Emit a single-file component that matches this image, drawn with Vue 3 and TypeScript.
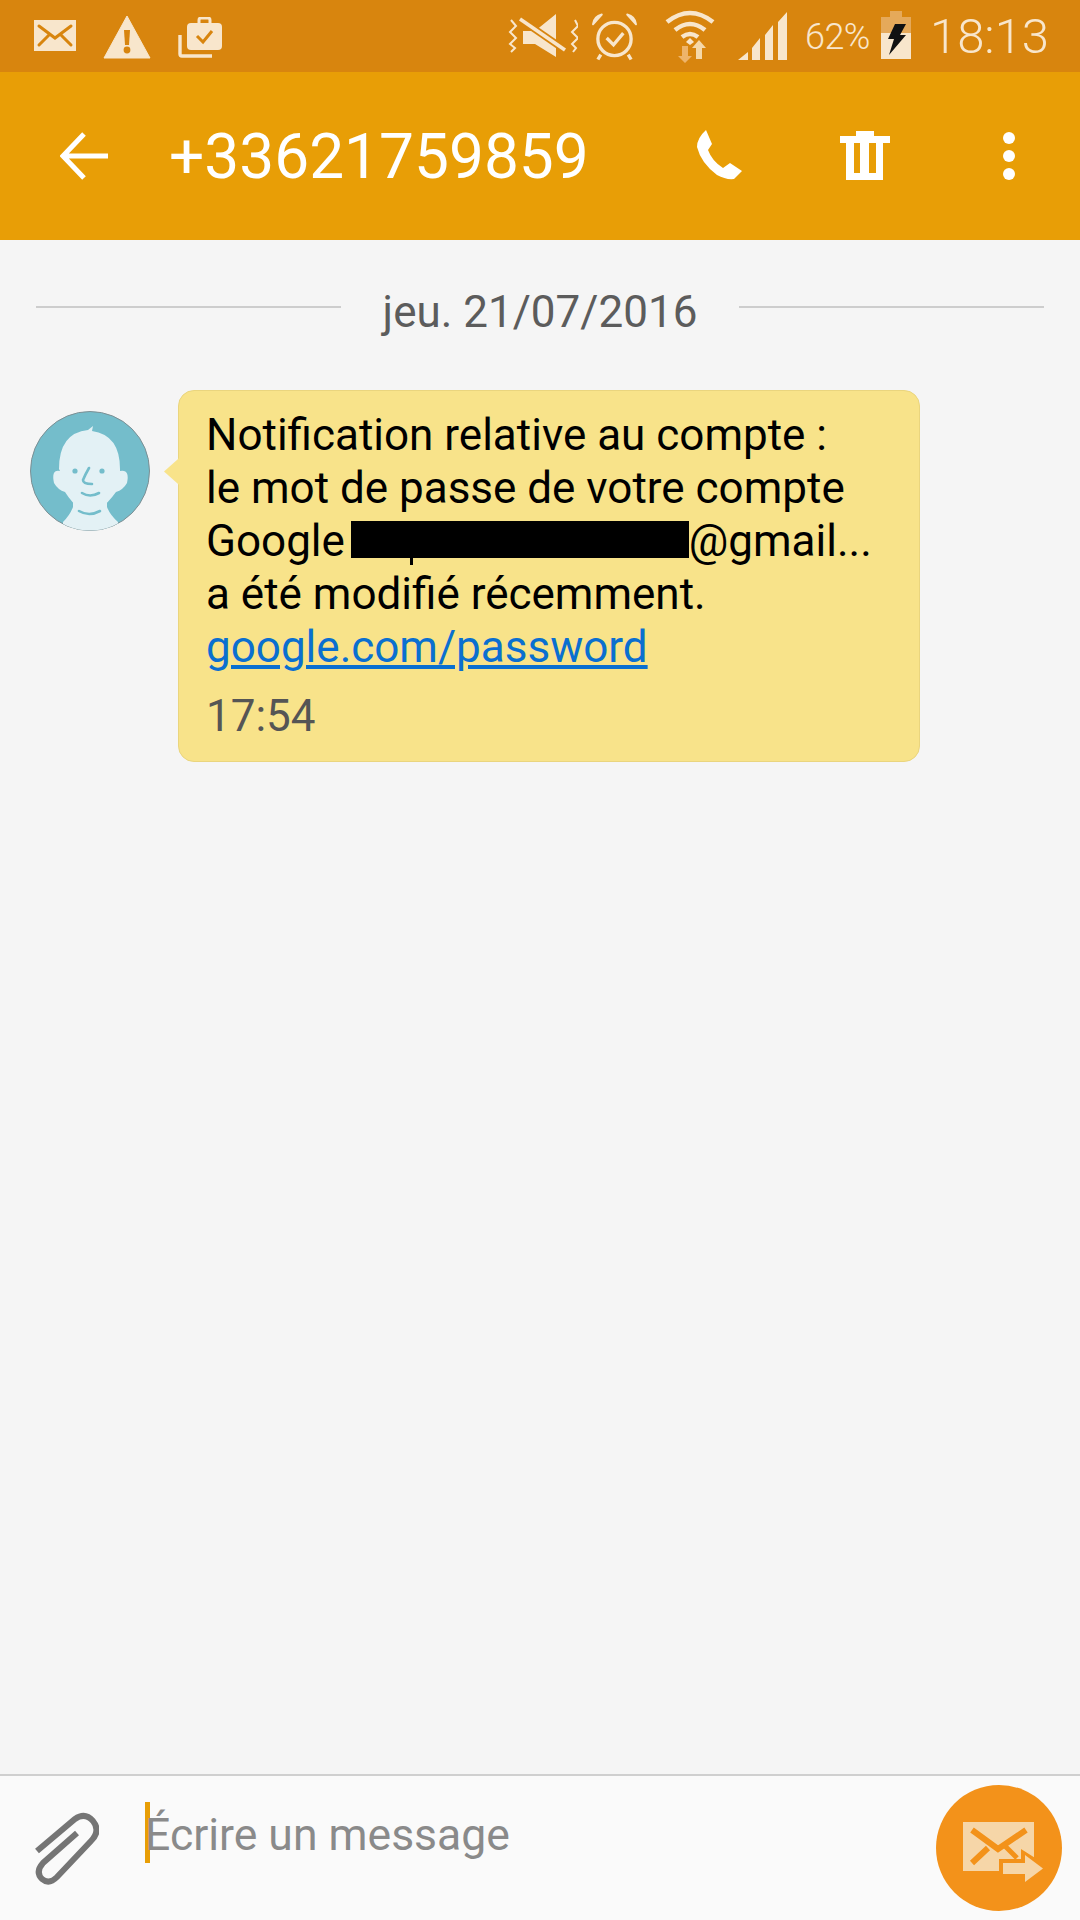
<script setup lang="ts">
const lines: string[] = ['Notification relative au compte :', 'le mot de passe de votre compte']
</script>

<template>
  <div class="screen">
    <header class="status">
      <div class="status-left">
        <svg class="i-mail" width="42" height="31" viewBox="0 0 42 31"><rect width="42" height="31" fill="#f8e6cc"/><path d="M5 6 L21 18 L37 6 M5 25 L15 15 M37 25 L27 15" fill="none" stroke="#d8850e" stroke-width="3" stroke-linecap="round"/></svg>
        <svg class="i-warn" width="48" height="44" viewBox="0 0 48 44"><path d="M24 1 L47 43 H1 Z" fill="#f8e6cc" stroke="#f8e6cc" stroke-linejoin="round"/><path d="M21 15 H27 L26 30 H22 Z" fill="#d8850e"/><circle cx="24" cy="35" r="3.4" fill="#d8850e"/></svg>
        <svg class="i-case" width="44" height="41" viewBox="0 0 44 41"><path d="M2 18 V37 Q2 39 4 39 H34" fill="none" stroke="#f8e6cc" stroke-width="3.4"/><rect x="9" y="6" width="35" height="27" rx="4" fill="#f8e6cc"/><path d="M21 6 V3 Q21 1 23 1 H30 Q32 1 32 3 V6" fill="none" stroke="#f8e6cc" stroke-width="3"/><path d="M19 19 L25 25 L34 14" fill="none" stroke="#d8850e" stroke-width="3"/></svg>
      </div>
      <div class="status-right">
        <svg class="i-vib" width="70" height="46" viewBox="0 0 70 46"><path d="M15 18 H27 L48 1 V44 L27 31 H15 Z" fill="#f8e6cc"/><path d="M12 6 L57 37" stroke="#d8850e" stroke-width="7"/><path d="M12 6 L57 37" stroke="#f8e6cc" stroke-width="3.6"/><path d="M3 7 L8 13 L2 19 L8 25 L2 31 L7 35 L3 39 M67 7 L70 13 L64 19 L70 25 L64 31 L68 35 L65 39" fill="none" stroke="#f8e6cc" stroke-width="2"/></svg>
        <svg class="i-alarm" width="45" height="48" viewBox="0 0 46 48"><circle cx="23" cy="26" r="17" fill="none" stroke="#f8e6cc" stroke-width="3.4"/><path d="M1 11 Q2 3 10 1 Z M45 11 Q44 3 36 1 Z" fill="#f8e6cc" stroke="#f8e6cc" stroke-width="2" stroke-linejoin="round"/><path d="M9 42 L6 47 M37 42 L40 47" stroke="#f8e6cc" stroke-width="3.4"/><path d="M15 25 L22 32 L32 20" fill="none" stroke="#f8e6cc" stroke-width="3.4"/></svg>
        <svg class="i-wifi" width="50" height="54" viewBox="0 0 50 54"><path d="M2 13 Q25 -5 48 13 M10 21 Q25 9 40 21 M17 28 Q25 22 33 28" fill="none" stroke="#f8e6cc" stroke-width="4.6"/><path d="M21 33 L25 29 L29 33 L25 36 Z" fill="#f8e6cc"/><path d="M17 37 H23 V47 H27 L20 54 L13 47 H17 Z" fill="#eeb46a"/><path d="M31 50 H37 V39 H41 L34 31 L27 39 H31 Z" fill="#f5d8a8"/></svg>
        <svg class="i-signal" width="49" height="48" viewBox="0 0 49 48"><path d="M0 48 L10 40 V48 Z M14 48 V36 L22 26 V48 Z M27 48 V23 L35 13 V48 Z M40 48 V10 L49 0 V48 Z" fill="#f8e6cc"/></svg>
        <span class="pct">62%</span>
        <svg class="i-batt" width="30" height="48" viewBox="0 0 30 48"><rect x="9" y="0" width="12" height="6" fill="#e5a95a"/><rect x="0" y="6" width="30" height="42" fill="#e5a95a"/><rect x="0" y="22" width="30" height="26" fill="#f8e6cc"/><path d="M14 13 H25 L19 24 H25 L8 44 L13 28 H7 Z" fill="#111"/></svg>
        <span class="clock">18:13</span>
      </div>
    </header>

    <nav class="appbar">
      <svg class="back" width="48" height="48" viewBox="0 0 48 48"><path d="M48 24 H3 M24 2 L3 24 L24 46" fill="none" stroke="#fff" stroke-width="5"/></svg>
      <h1 class="title">+33621759859</h1>
      <svg class="phone" width="46" height="50" viewBox="0 0 46 50"><path d="M9 0 L15 14 L11 20 Q15 31 26 38 L33 33 L45 41 L37 49 Q29 50 20 45 Q4 33 0 17 Q0 8 9 0 Z" fill="#fff"/></svg>
      <svg class="trash" width="50" height="49" viewBox="0 0 50 49"><path d="M16 0 H34 V5 H50 V12 H43 V49 H6 V12 H0 V5 H16 Z" fill="#fff"/><rect x="14" y="12" width="6" height="30" fill="#e89e06"/><rect x="29" y="12" width="7" height="30" fill="#e89e06"/></svg>
      <svg class="dots" width="12" height="48" viewBox="0 0 12 48"><circle cx="6" cy="6" r="6" fill="#fff"/><circle cx="6" cy="24" r="6" fill="#fff"/><circle cx="6" cy="42" r="6" fill="#fff"/></svg>
    </nav>

    <main class="thread">
      <div class="date">
        <span class="rule"></span>
        <span class="date-text">jeu. 21/07/2016</span>
        <span class="rule"></span>
      </div>
      <div class="msg">
        <svg class="avatar" width="120" height="120" viewBox="0 0 120 120">
          <defs><clipPath id="avatar-clip"><circle cx="60" cy="60" r="59.5"/></clipPath></defs>
          <circle cx="60" cy="60" r="59.5" fill="#74bdcb" stroke="#7c8f94" stroke-width="1"/>
          <g clip-path="url(#avatar-clip)">
            <path d="M33 111 Q40 104 43 96 L43 80 H77 V96 Q80 104 88 111 L88 120 H33 Z" fill="#e3f1f5"/>
            <path d="M29 58 Q29 22 58 19 L63 15 L62 20 Q90 24 90 58 L90 60 Q100 58 97 72 Q93 79 86 81 Q78 92 70 98 H50 Q42 92 35 81 Q28 79 24 72 Q21 58 30 60 Z" fill="#e3f1f5"/>
            <circle cx="45" cy="60" r="2.6" fill="#74bdcb"/><circle cx="72" cy="60" r="2.6" fill="#74bdcb"/>
            <path d="M59 57 Q55 64 53 69 Q53 73 62 73 M52 82 Q60 87 69 82 M49 100 Q59 106 70 100" fill="none" stroke="#74bdcb" stroke-width="2.6" stroke-linecap="round"/>
          </g>
        </svg>
        <article class="bubble">
          <p class="body">
            <span v-for="l in lines" :key="l" class="line">{{ l }}</span>
            <span class="line">Google <span class="redact"></span>@gmail...</span>
            <span class="line">a été modifié récemment.</span>
            <a class="link">google.com/password</a>
          </p>
          <time class="time">17:54</time>
        </article>
      </div>
    </main>

    <footer class="composer">
      <svg class="clip" width="64" height="74" viewBox="0 0 64 74"><path d="M2 38 L40 6 Q50 -1 58 8 Q66 18 56 28 L22 64 Q14 72 7 66 Q0 59 8 50 L42 20" transform="translate(0 1)" fill="none" stroke="#757575" stroke-width="6"/></svg>
      <div class="input"><span class="caret"></span><span class="placeholder">Écrire un message</span></div>
      <div class="send">
        <svg width="72" height="62" viewBox="0 0 72 62"><rect x="0" y="0" width="71" height="49" fill="#f6d6a8"/><path d="M9 8 L35 27 L63 8 M9 41 L25 26" fill="none" stroke="#f3921a" stroke-width="6"/><path d="M42 24 L54 36" stroke="#f3921a" stroke-width="5"/><path d="M36 37 H58 V27 L88 46 L58 66 V56 H36 Z" fill="#f3921a"/><path d="M40 41 H62 V33 L80 46.5 L62 60 V52 H40 Z" fill="#f6d6a8"/></svg>
      </div>
    </footer>
  </div>
</template>

<style>
html, body { margin: 0; padding: 0; }
</style>

<style scoped>
.screen { width: 1080px; height: 1920px; display: flex; flex-direction: column; background: #f5f5f5; font-family: Roboto, "Liberation Sans", sans-serif; overflow: hidden; }
.status { height: 72px; flex: none; background: #d8850e; display: flex; justify-content: space-between; box-sizing: border-box; padding: 0 31px 0 34px; color: #f8e6cc; }
.status svg { display: block; flex: none; }
.status-left, .status-right { display: flex; align-items: flex-start; }
.i-mail { margin-top: 20px; }
.i-warn { margin: 15px 0 0 27px; }
.i-case { margin: 17px 0 0 27px; }
.i-vib { margin-top: 13px; }
.i-alarm { margin: 13px 0 0 14px; }
.i-wifi { margin: 9px 0 0 28px; }
.i-signal { margin: 12px 0 0 23px; }
.pct { font-size: 36px; line-height: 74px; margin-left: 18px; font-weight: 300; letter-spacing: -0.5px; }
.i-batt { margin: 11px 0 0 11px; }
.clock { font-size: 49px; line-height: 74px; margin-left: 19px; font-weight: 300; }
.appbar { height: 168px; flex: none; background: #e89e06; display: flex; align-items: center; box-sizing: border-box; padding-left: 60px; color: #fff; }
.appbar svg { display: block; flex: none; }
.title { margin: 2px 0 0 61px; width: 528px; font-size: 62.2px; font-weight: 400; line-height: 1; white-space: nowrap; }
.phone { margin-top: -2px; }
.trash { margin: -2px 0 0 97px; }
.dots { margin: 0 0 0 113px; }
.thread { flex: 1; min-height: 0; }
.date { display: flex; align-items: center; padding: 0 36px; margin-top: 45px; height: 54px; }
.rule { flex: 1; height: 2px; background: #cdcdcd; margin-top: -11px; }
.date-text { font-size: 44px; line-height: 54px; color: #5c5c5c; padding: 0 42px; white-space: nowrap; }
.msg { display: flex; align-items: flex-start; margin-top: 51px; padding-left: 30px; }
.avatar { display: block; flex: none; margin-top: 21px; }
.bubble { position: relative; margin-left: 28px; width: 742px; height: 372px; box-sizing: border-box; padding: 18px 28px 0 27px; background: #f8e38a; border: 1px solid #ead57e; border-radius: 16px; }
.bubble::before { content: ""; position: absolute; left: -15px; top: 67px; width: 19px; height: 27px; background: #f8e38a; clip-path: polygon(0 50%, 80% 0, 100% 0, 100% 100%, 80% 100%); }
.body { margin: 0; font-size: 44px; line-height: 53px; color: #000; }
.line { display: block; white-space: nowrap; }
.redact { position: relative; display: inline-block; width: 338px; height: 37px; background: #000; vertical-align: -2px; margin-left: -5px; }
.redact::after { content: ""; position: absolute; left: 59px; top: 37px; width: 3px; height: 7px; background: #000; }
.link { display: block; color: #0a6fd0; text-decoration: underline; }
.time { display: block; font-size: 44px; line-height: 53px; color: #555; margin-top: 16px; }
.composer { height: 146px; flex: none; background: #fafafa; border-top: 2px solid #cfcfcf; display: flex; box-sizing: border-box; padding-left: 35px; position: relative; }
.clip { display: block; flex: none; margin-top: 36px; }
.input { display: flex; align-items: flex-start; margin-left: 46px; }
.caret { width: 5px; height: 61px; background: #e89e06; margin-top: 26px; flex: none; }
.placeholder { font-size: 44.5px; line-height: 56px; color: #8a8a8a; margin: 31px 0 0 -5px; white-space: nowrap; }
.send { position: absolute; left: 936px; top: 9px; width: 126px; height: 126px; border-radius: 50%; background: #f3921a; overflow: hidden; display: flex; align-items: center; justify-content: center; }
.send svg { display: block; margin: 10px 0 0 0; overflow: visible; }
</style>
